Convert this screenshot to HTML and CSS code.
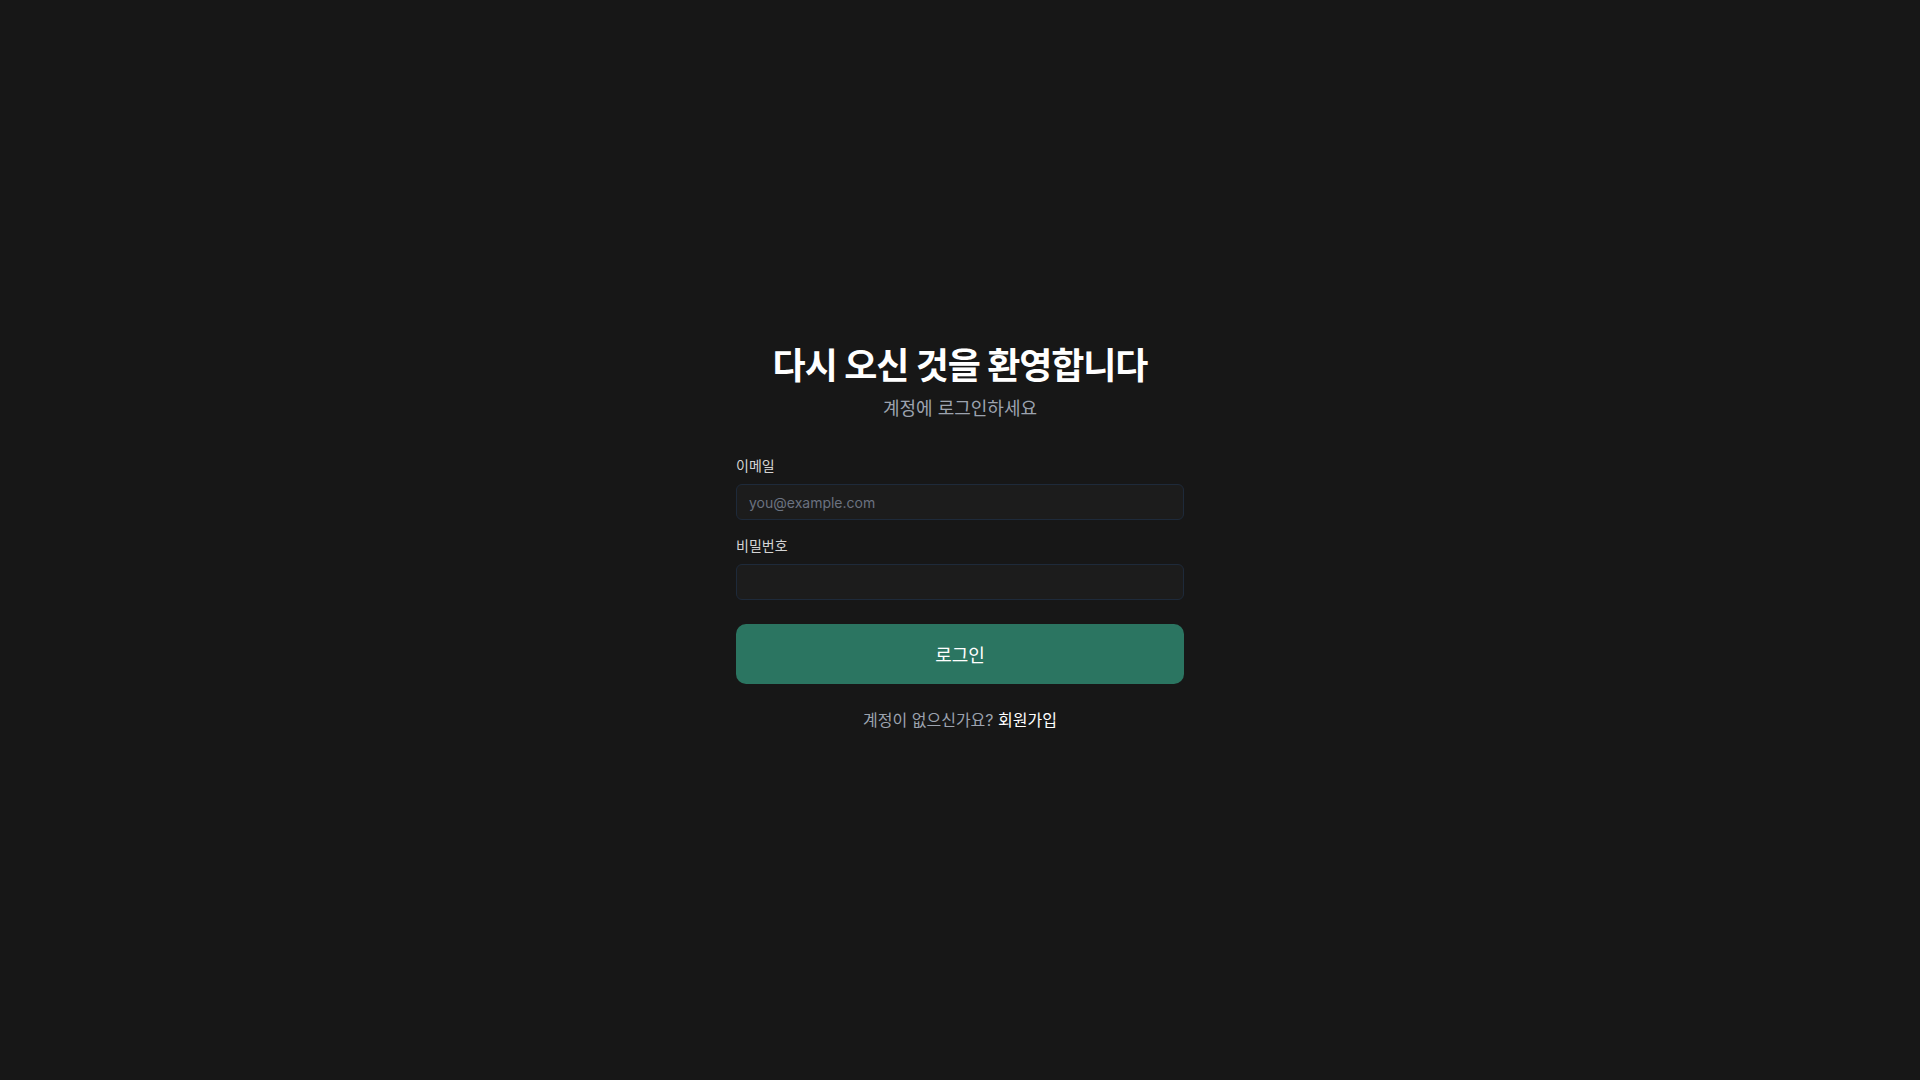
FILE: index.html
```html
<!DOCTYPE html>
<html lang="ko">
<head>
<meta charset="utf-8">
<title>로그인</title>
<link rel="stylesheet" href="styles.css">
</head>
<body>
<main class="page">
  <div class="card">
    <header class="head">
      <h1 class="title">다시 오신 것을 환영합니다</h1>
      <p class="subtitle">계정에 로그인하세요</p>
    </header>
    <form class="form">
      <div class="field">
        <label class="label" for="email">이메일</label>
        <input class="input" id="email" type="email" placeholder="you@example.com">
      </div>
      <div class="field">
        <label class="label" for="pw">비밀번호</label>
        <input class="input" id="pw" type="password">
      </div>
      <button class="btn" type="button">로그인</button>
    </form>
    <p class="foot">계정이 없으신가요? <a class="link" href="#">회원가입</a></p>
  </div>
</main>
</body>
</html>
```

FILE: styles.css
```css
* { box-sizing: border-box; }
html, body { margin: 0; padding: 0; }
body {
  background: #171717;
  color: #ededed;
  font-family: Inter, "Noto Sans CJK KR", sans-serif;
  font-weight: 400;
}
.page {
  min-height: 100vh;
  display: flex;
  align-items: center;
  justify-content: center;
  padding-bottom: 2px;
}
.card {
  width: 448px;
  display: flex;
  flex-direction: column;
}
.head {
  text-align: center;
  margin-bottom: 33px;
}
.title {
  margin: 0 0 9px;
  font-size: 36px;
  line-height: 40px;
  font-weight: 700;
  color: #ffffff;
  letter-spacing: -0.03em;
}
.subtitle {
  margin: 0;
  font-size: 18px;
  line-height: 28px;
  color: #9ca3af;
}
.form {
  display: flex;
  flex-direction: column;
  gap: 16px;
}
.field {
  display: flex;
  flex-direction: column;
  gap: 8px;
}
.label {
  font-size: 14px;
  line-height: 20px;
  color: #d4d4d4;
  font-weight: 400;
}
.input {
  height: 36px;
  width: 100%;
  padding: 0 12px;
  background: #1c1c1c;
  border: 1px solid #1e2a3a;
  border-radius: 6px;
  color: #ededed;
  font-family: Inter, "Noto Sans CJK KR", sans-serif;
  font-size: 14px;
  outline: none;
}
.input::placeholder { color: #6b7280; }
.btn {
  margin-top: 8px;
  height: 60px;
  width: 100%;
  border: none;
  border-radius: 10px;
  background: #2b7561;
  color: #ffffff;
  font-family: Inter, "Noto Sans CJK KR", sans-serif;
  font-size: 18px;
  font-weight: 400;
  cursor: pointer;
}
.foot {
  margin: 24px 0 0;
  text-align: center;
  font-size: 16px;
  line-height: 24px;
  color: #9ca3af;
}
.link {
  color: #ffffff;
  text-decoration: none;
}
```
